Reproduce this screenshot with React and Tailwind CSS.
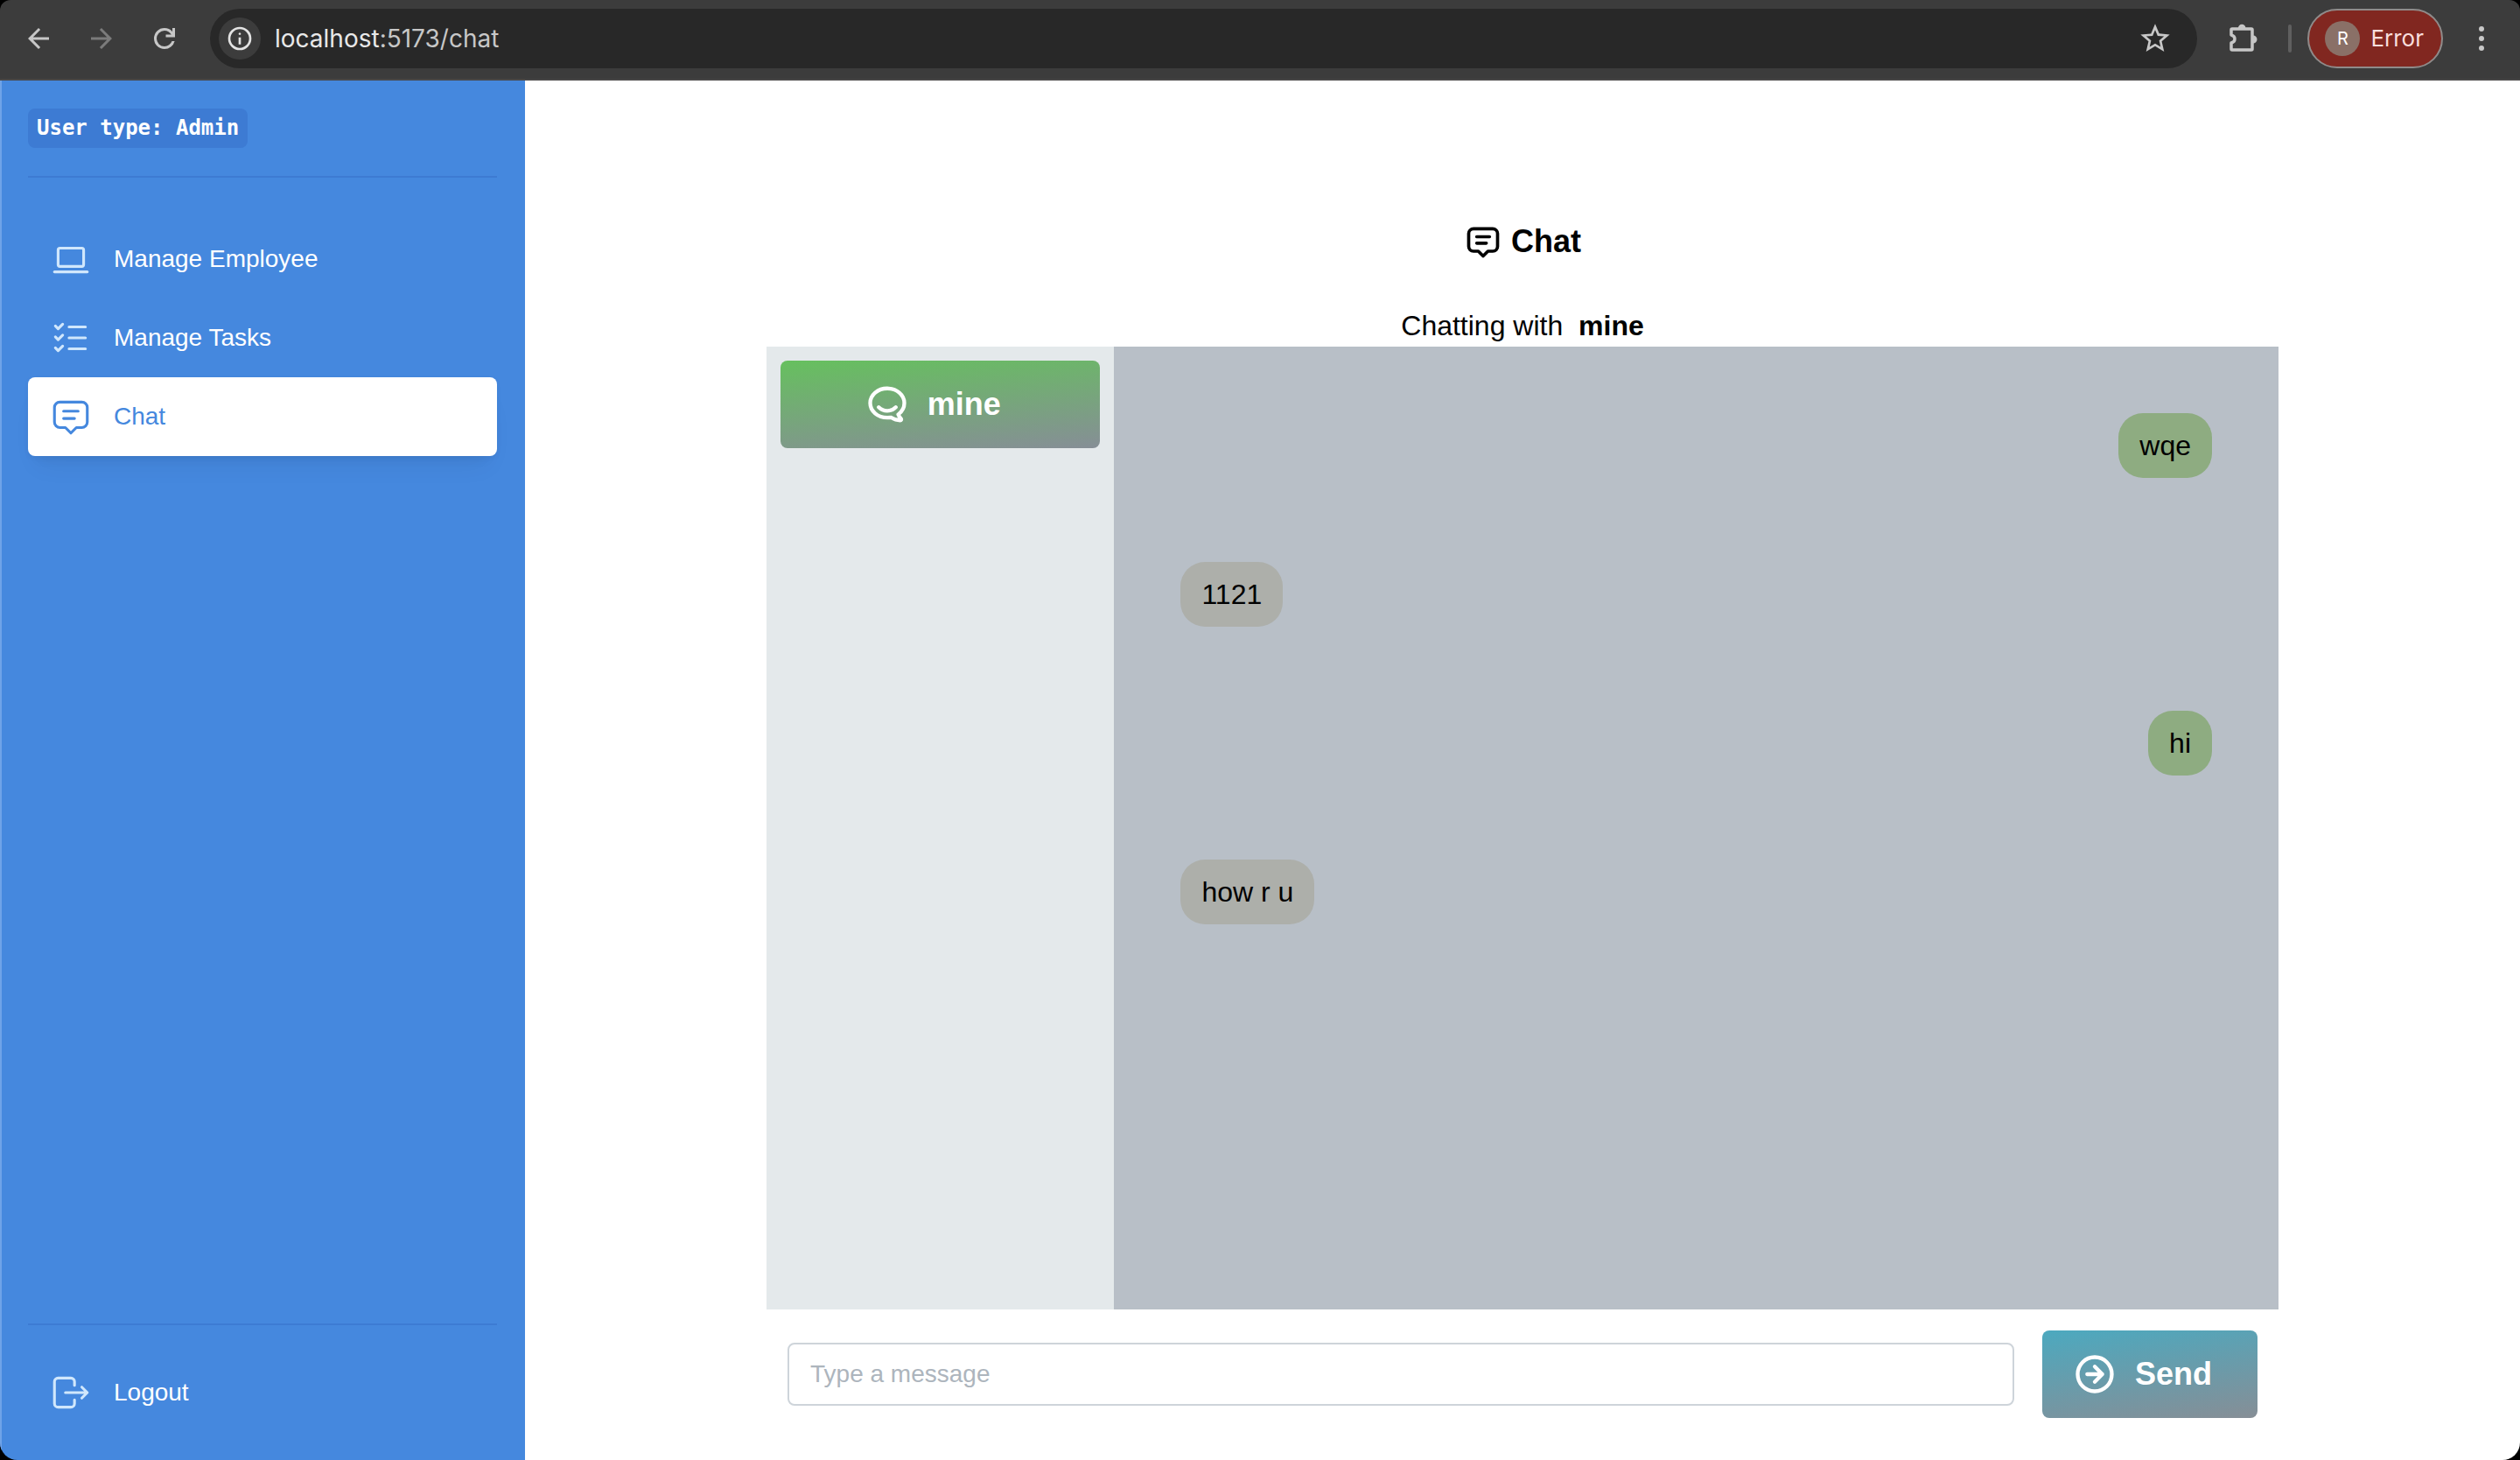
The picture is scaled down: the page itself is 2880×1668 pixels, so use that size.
const SANS = 'font-["Liberation_Sans",Arial,sans-serif]';

function Icon({ className, stroke = 2, children }) {
  return (
    <svg
      className={className}
      viewBox="0 0 24 24"
      fill="none"
      stroke="currentColor"
      strokeWidth={stroke}
      strokeLinecap="round"
      strokeLinejoin="round"
      aria-hidden="true"
    >
      {children}
    </svg>
  );
}

const laptop = (
  <>
    <path d="M3 19h18" />
    <rect x="5" y="6" width="14" height="10" rx="1" />
  </>
);

const listCheck = (
  <>
    <path d="M3.5 5.5l1.5 1.5l2.5 -2.5" />
    <path d="M3.5 11.5l1.5 1.5l2.5 -2.5" />
    <path d="M3.5 17.5l1.5 1.5l2.5 -2.5" />
    <path d="M11 6h9M11 12h9M11 18h9" />
  </>
);

const message = (
  <>
    <path d="M8 9h8M8 13h6" />
    <path d="M9 18h-3a3 3 0 0 1 -3 -3v-8a3 3 0 0 1 3 -3h12a3 3 0 0 1 3 3v8a3 3 0 0 1 -3 3h-3l-3 3l-3 -3z" />
  </>
);

const logout = (
  <>
    <path d="M14 8v-2a2 2 0 0 0 -2 -2h-7a2 2 0 0 0 -2 2v12a2 2 0 0 0 2 2h7a2 2 0 0 0 2 -2v-2" />
    <path d="M9 12h12l-3 -3M18 15l3 -3" />
  </>
);

const hipchat = (
  <>
    <path d="M17.802 17.292s.077 -.055 .2 -.149c1.843 -1.425 3 -3.49 3 -5.789c0 -4.286 -4.03 -7.764 -9 -7.764c-4.97 0 -9 3.478 -9 7.764c0 4.288 4.03 7.646 9 7.646c.424 0 1.12 -.028 2.088 -.084c1.262 .82 3.104 1.493 4.716 1.493c.499 0 .734 -.41 .414 -.828c-.486 -.596 -1.156 -1.551 -1.416 -2.29z" />
    <path d="M7.5 13.5c2.5 2.5 6.5 2.5 9 0" />
  </>
);

const circleArrow = (
  <>
    <circle cx="12" cy="12" r="9" />
    <path d="M16 12l-4 -4M16 12h-8M12 16l4 -4" />
  </>
);

function BrowserBar() {
  return (
    <header className="flex h-[92px] shrink-0 items-center border-b-2 border-[#484747] bg-[#3c3c3c] pb-0.5 pl-5 pr-6 text-[#c7c7c7]">
      <div className="flex gap-6">
        <button aria-label="Back" className="flex size-12 items-center justify-center">
          <svg className="size-9" viewBox="0 0 24 24" fill="currentColor">
            <path d="M20 11H7.83l5.59-5.59L12 4l-8 8 8 8 1.41-1.41L7.83 13H20v-2z" />
          </svg>
        </button>
        <button aria-label="Forward" className="flex size-12 items-center justify-center text-[#7b7b7b]">
          <svg className="size-9" viewBox="0 0 24 24" fill="currentColor">
            <path d="M12 4l-1.41 1.41L16.17 11H4v2h12.17l-5.58 5.59L12 20l8-8z" />
          </svg>
        </button>
        <button aria-label="Reload" className="flex size-12 items-center justify-center">
          <svg className="size-9" viewBox="0 0 24 24" fill="currentColor">
            <path d="M12 20q-3.35 0-5.675-2.325T4 12t2.325-5.675T12 4q1.725 0 3.3.713T18 6.75V4h2v7h-7V9h4.2q-.8-1.4-2.187-2.2T12 6Q9.500 6 7.750 7.750T6 12t1.750 4.250T12 18q1.925 0 3.475-1.100T17.650 14h2.100q-.7 2.650-2.850 4.325T12 20z" />
          </svg>
        </button>
      </div>
      <div className="ml-7 flex h-[68px] flex-1 items-center rounded-full bg-[#282828] pl-2.5 pr-7">
        <button aria-label="View site information" className="flex size-12 shrink-0 items-center justify-center rounded-full bg-[#3c3c3c] text-[#e3e3e3]">
          <svg className="size-8" viewBox="0 0 24 24" fill="currentColor">
            <path d="M11 17h2v-6h-2v6zm1-8q.425 0 .713-.288T13 8t-.288-.713T12 7t-.713.288T11 8t.288.713T12 9zm0 13a10 10 0 1 1 0-20a10 10 0 0 1 0 20zm0-2a8 8 0 1 0 0-16a8 8 0 0 0 0 16z" />
          </svg>
        </button>
        <div className='ml-4 flex-1 font-["Inter",sans-serif] text-[28px] leading-9 text-[#c7c7c7]'>
          <span className="text-[#e8e8e8]">localhost</span>:5173/chat
        </div>
        <button aria-label="Bookmark this page">
          <svg className="size-10" viewBox="0 0 24 24" fill="currentColor">
            <path d="M22 9.240l-7.190-.62L12 2 9.190 8.630 2 9.240l5.460 4.730L5.820 21 12 17.270 18.180 21l-1.630-7.030L22 9.240zM12 15.400l-3.760 2.270 1-4.280-3.320-2.880 4.380-.38L12 6.100l1.710 4.040 4.380.38-3.320 2.880 1 4.280L12 15.400z" />
          </svg>
        </button>
      </div>
      <button aria-label="Extensions" className="ml-9">
        <svg className="size-9" viewBox="0 0 36 36" aria-hidden="true">
          <path
            d="M5 7h21q1 0 1 1v22q0 1-1 1H4q-1 0-1-1v-7q4-1 4-4.500t-4-4.500V8q0-1 1-1z"
            fill="none"
            stroke="currentColor"
            strokeWidth="3.500"
            strokeLinejoin="round"
          />
          <path d="M11 6a4.200 4.200 0 0 1 8.400 0zM28 14.500a4.200 4.200 0 0 1 0 9z" fill="currentColor" />
        </svg>
      </button>
      <div className="ml-8 h-8 w-1 rounded-full bg-[#5f5f5f]" />
      <button className="ml-[18px] flex h-[68px] items-center gap-3 rounded-full border-2 border-[#8f8b8a] bg-[#812720] pl-[18px] pr-5 font-['Inter',sans-serif]">
        <span className="flex size-10 items-center justify-center rounded-full bg-[#8a7067] text-xl text-white">R</span>
        <span className="text-[26px] leading-8 text-[#f9dedc]">Error</span>
      </button>
      <button aria-label="Browser menu" className="ml-6 flex size-10 items-center justify-center">
        <svg className="size-7" viewBox="0 0 28 28" fill="currentColor">
          <circle cx="14" cy="3" r="3" />
          <circle cx="14" cy="14" r="3" />
          <circle cx="14" cy="25" r="3" />
        </svg>
      </button>
    </header>
  );
}

function NavLink({ icon, label, active }) {
  return (
    <a
      href="#"
      aria-current={active ? "page" : undefined}
      className={
        active
          ? "flex h-[90px] items-center gap-6 rounded-lg bg-white px-6 text-[28px] text-[#4588de] shadow-[0_2px_6px_rgba(0,0,0,0.05),0_20px_30px_-10px_rgba(0,0,0,0.05),0_14px_14px_-10px_rgba(0,0,0,0.04)]"
          : "flex h-[90px] items-center gap-6 rounded-lg px-6 text-[28px] text-white"
      }
    >
      <Icon stroke={1.5} className={active ? "size-[50px]" : "size-[50px] text-[#d0e7fc]"}>
        {icon}
      </Icon>
      {label}
    </a>
  );
}

function Sidebar() {
  return (
    <aside className="flex w-[600px] shrink-0 flex-col justify-between border-l-2 border-[#6fa3e8] bg-[#4588de] py-8 pl-[30px] pr-8">
      <div>
        <div className="border-b-2 border-[#3d7bd3] pb-8">
          <code className='block w-fit rounded-lg bg-[#3d7bd3] px-2.5 py-1 font-["DejaVu_Sans_Mono",monospace] text-2xl leading-[37px] font-bold text-white'>
            User type: Admin
          </code>
        </div>
        <nav className="mt-12">
          <NavLink icon={laptop} label="Manage Employee" />
          <NavLink icon={listCheck} label="Manage Tasks" />
          <NavLink icon={message} label="Chat" active />
        </nav>
      </div>
      <div className="border-t-2 border-[#3d7bd3] pt-8">
        <NavLink icon={logout} label="Logout" />
      </div>
    </aside>
  );
}

const messages = [
  { text: "wqe", mine: true },
  { text: "1121", mine: false },
  { text: "hi", mine: true },
  { text: "how r u", mine: false },
];

function Chat() {
  return (
    <main className="flex flex-1 flex-col items-center bg-white text-black">
      <h1 className="mt-40 flex h-12 items-center gap-2.5 text-4xl font-bold">
        <Icon className="size-11">{message}</Icon>
        Chat
      </h1>
      <p className="mt-[52px] h-11 whitespace-pre text-[32px] leading-10">
        Chatting with {" "}
        <b>mine</b>
      </p>
      <div className="w-[60vw]">
        <div className="flex h-[1100px]">
          <div className="w-[23%] bg-[#e4e9eb] p-4">
            <button className="flex h-[100px] w-full items-center justify-center gap-5 rounded-lg bg-[linear-gradient(175deg,#66c05e,#868e96)] pr-[18px] text-4xl font-bold text-white">
              <Icon className="size-[52px]">{hipchat}</Icon>
              mine
            </button>
          </div>
          <div className="flex flex-1 flex-col gap-24 bg-[#b8bfc7] p-[76px] text-[32px] leading-[38px]">
            {messages.map((m) => (
              <div
                key={m.text}
                className={
                  m.mine
                    ? "self-end rounded-[28px] bg-[#8eac81] px-6 py-[18px]"
                    : "self-start rounded-[28px] bg-[#adafaa] px-6 py-[18px]"
                }
              >
                {m.text}
              </div>
            ))}
          </div>
        </div>
        <form className="flex items-center gap-8 p-6" onSubmit={(e) => e.preventDefault()}>
          <input
            type="text"
            aria-label="Message"
            placeholder="Type a message"
            className="h-[72px] min-w-0 flex-1 rounded-lg border-2 border-[#ced4da] px-6 text-[28px] outline-none placeholder:text-[#adb5bd]"
          />
          <button
            type="submit"
            className="flex h-[100px] items-center gap-5 rounded-lg bg-[linear-gradient(172deg,#4ca9bf,#868e96)] pl-[34px] pr-[52px] text-4xl font-bold text-white"
          >
            <Icon className="size-[52px]">{circleArrow}</Icon>
            Send
          </button>
        </form>
      </div>
    </main>
  );
}

export default function App() {
  return (
    <div className="min-h-screen bg-black">
      <div className={`flex min-h-screen flex-col overflow-hidden rounded-t-xl rounded-b-[20px] ${SANS}`}>
        <BrowserBar />
        <div className="flex flex-1">
          <Sidebar />
          <Chat />
        </div>
      </div>
    </div>
  );
}
